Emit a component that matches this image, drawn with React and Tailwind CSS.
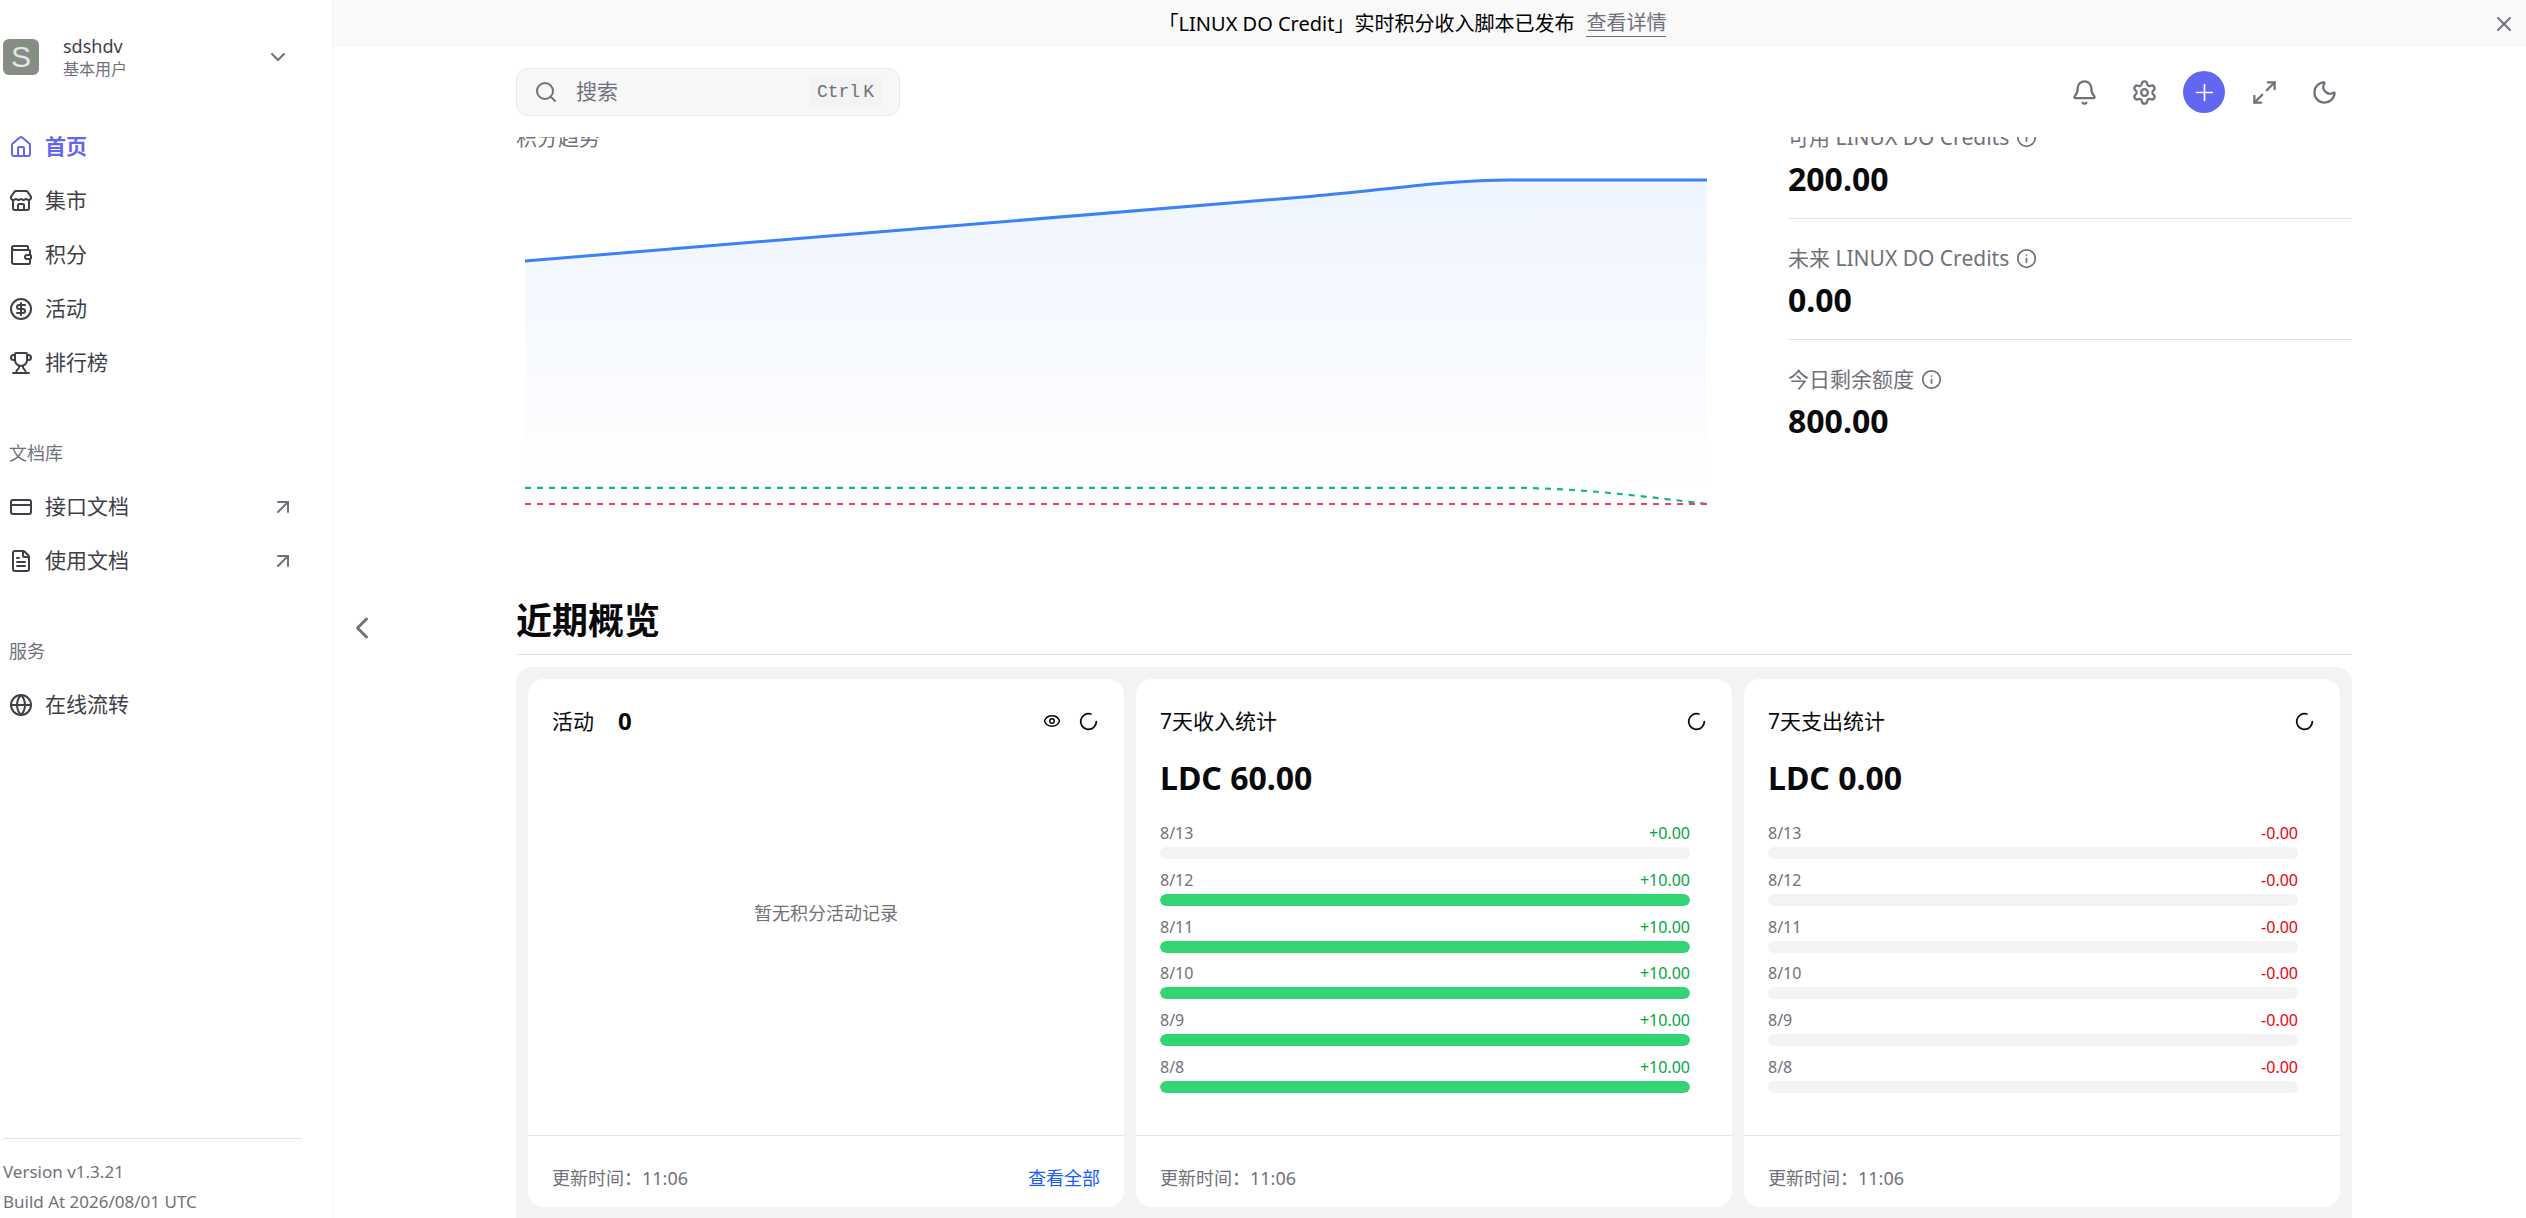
import React, { useState } from "react";
import {
  ArrowUpRight,
  Bell,
  ChevronDown,
  ChevronLeft,
  CircleDollarSign,
  CreditCard,
  Eye,
  FileText,
  Globe,
  House,
  Info,
  LoaderCircle,
  Maximize2,
  Moon,
  Plus,
  Search,
  Settings,
  Store,
  Trophy,
  Wallet,
  X,
} from "lucide-react";

const NAV_GROUPS = [
  {
    items: [
      { label: "首页", icon: House, active: true },
      { label: "集市", icon: Store },
      { label: "积分", icon: Wallet },
      { label: "活动", icon: CircleDollarSign },
      { label: "排行榜", icon: Trophy },
    ],
  },
  {
    title: "文档库",
    items: [
      { label: "接口文档", icon: CreditCard, external: true },
      { label: "使用文档", icon: FileText, external: true },
    ],
  },
  {
    title: "服务",
    items: [{ label: "在线流转", icon: Globe }],
  },
];

const BALANCES = [
  { label: "可用 LINUX DO Credits", value: "200.00" },
  { label: "未来 LINUX DO Credits", value: "0.00" },
  { label: "今日剩余额度", value: "800.00" },
];

const INCOME = [
  { date: "8/13", amount: 0 },
  { date: "8/12", amount: 10 },
  { date: "8/11", amount: 10 },
  { date: "8/10", amount: 10 },
  { date: "8/9", amount: 10 },
  { date: "8/8", amount: 10 },
];

const EXPENSE = INCOME.map(({ date }) => ({ date, amount: 0 }));

const NavItem = ({ label, icon: Icon, active, external }) => (
  <a
    href="#"
    className={`flex h-12 items-center gap-3 pl-[9px] text-[21px] ${
      active ? "font-bold text-[#6366f1]" : "text-zinc-700"
    }`}
  >
    <Icon size={24} />
    <span className="flex-1">{label}</span>
    {external && <ArrowUpRight size={24} className="mr-[7px] text-zinc-500" />}
  </a>
);

const Sidebar = () => (
  <aside className="flex w-[333px] shrink-0 flex-col border-r border-zinc-100 pl-[3px] pr-[30px]">
    <button className="mt-[34px] flex items-center gap-6 text-left">
      <span className="flex size-9 items-center justify-center rounded-md bg-[#858d84] font-['Liberation_Sans'] text-[30px] leading-9 text-[#e4e6e4]">
        S
      </span>
      <span className="flex flex-1 flex-col">
        <span className="text-[18px] leading-6 text-zinc-700">sdshdv</span>
        <span className="text-[16px] leading-[22px] text-zinc-500">基本用户</span>
      </span>
      <ChevronDown size={24} className="mr-3 text-zinc-500" />
    </button>

    <nav className="-ml-[3px] mt-[43px] flex flex-col gap-[53px]">
      {NAV_GROUPS.map((group, i) => (
        <div key={i}>
          {group.title && (
            <h3 className="mb-4 pl-[9px] text-[18px] leading-[27px] text-zinc-500">{group.title}</h3>
          )}
          <div className="flex flex-col gap-[6px]">
            {group.items.map((item) => (
              <NavItem key={item.label} {...item} />
            ))}
          </div>
        </div>
      ))}
    </nav>

    <div className="mt-auto border-t border-zinc-200 pb-px pt-[18px] text-[17px] leading-[30px] text-zinc-500">
      <p>Version v1.3.21</p>
      <p>Build At 2026/08/01 UTC</p>
    </div>
  </aside>
);

const Banner = ({ onClose }) => (
  <div className="flex h-[47px] shrink-0 items-center bg-[#f9f9f9] pr-[10px] text-[20px]">
    <p className="flex flex-1 items-center justify-center gap-3">
      <span className="text-black">「LINUX DO Credit」实时积分收入脚本已发布</span>
      <a href="#" className="border-b border-zinc-500 leading-[26px] text-zinc-500">
        查看详情
      </a>
    </p>
    <button aria-label="关闭" onClick={onClose} className="text-zinc-500">
      <X size={24} />
    </button>
  </div>
);

const IconButton = ({ label, children }) => (
  <button aria-label={label} className="flex size-[54px] items-center justify-center text-zinc-500">
    {children}
  </button>
);

const Header = () => (
  <header className="flex h-[90px] shrink-0 items-center justify-between pl-[183px] pr-[175px]">
    <label className="flex h-12 w-96 items-center gap-[18px] rounded-xl border border-[#ebebeb] bg-[#f7f7f7] px-[17px] text-zinc-500">
      <Search size={24} className="shrink-0" />
      <input
        type="text"
        aria-label="搜索"
        placeholder="搜索"
        className="min-w-0 flex-1 bg-transparent text-[21px] outline-none placeholder:text-zinc-500"
      />
      <kbd className="flex h-[30px] items-center gap-[3px] rounded-md bg-[#f3f3f3] px-2 font-['Liberation_Mono'] text-[18px]">
        <span>Ctrl</span>
        <span>K</span>
      </kbd>
    </label>
    <div className="flex items-center gap-[6px]">
      <IconButton label="通知">
        <Bell size={27} />
      </IconButton>
      <IconButton label="设置">
        <Settings size={27} />
      </IconButton>
      <IconButton label="新建">
        <span className="flex size-[42px] items-center justify-center rounded-full bg-[#6366f1] text-white">
          <Plus size={27} strokeWidth={1.5} />
        </span>
      </IconButton>
      <IconButton label="全屏">
        <Maximize2 size={27} />
      </IconButton>
      <IconButton label="深色模式">
        <Moon size={27} />
      </IconButton>
    </div>
  </header>
);

const TrendChart = () => (
  <svg viewBox="0 0 1200 345" preserveAspectRatio="none" className="mt-[19px] h-[345px] w-full" fill="none">
    <defs>
      <linearGradient id="balance" x1="0" y1="0" x2="0" y2="1">
        <stop offset="5%" stopColor="#3b82f6" stopOpacity="0.08" />
        <stop offset="95%" stopColor="#3b82f6" stopOpacity="0" />
      </linearGradient>
    </defs>
    <path
      d="M9 90L797 25.2C862.7 19.8 928.3 9 994 9H1191V333H9Z"
      fill="url(#balance)"
    />
    <path
      d="M9 90L797 25.2C862.7 19.8 928.3 9 994 9H1191"
      stroke="#3b82f6"
      strokeWidth="3"
    />
    <path
      d="M9 316.8H994C1059.7 316.8 1125.3 324.9 1191 333"
      stroke="#10b981"
      strokeWidth="2.2"
      strokeDasharray="6 6"
    />
    <path d="M9 333H1191" stroke="#f43f5e" strokeWidth="2.2" strokeDasharray="6 6" />
  </svg>
);

const Balance = ({ label, value }) => (
  <div className="border-b border-zinc-200 pb-[18px] pt-6 first:pt-0 last:border-b-0">
    <p className="flex items-center gap-[7px] text-[21px] leading-[30px] text-zinc-500">
      {label}
      <Info size={21} />
    </p>
    <p className="mt-[6px] text-[32px] font-bold leading-[42px] text-zinc-950">{value}</p>
  </div>
);

const Card = ({ title, count, actions, footerLink, children }) => (
  <section className="flex min-h-[528px] flex-1 flex-col rounded-2xl bg-white">
    <div className="flex h-[60px] items-end justify-between px-6 text-[21px] leading-9 text-zinc-950">
      <h3 className="flex gap-6">
        {title}
        {count !== undefined && <span className="text-[24px] font-bold">{count}</span>}
      </h3>
      <div className="flex h-9 items-center gap-3">
        {actions}
        <button aria-label="刷新" className="flex size-6 items-center justify-center">
          <LoaderCircle size={21} />
        </button>
      </div>
    </div>
    <div className="flex flex-1 flex-col px-6">{children}</div>
    <div className="flex h-[72px] items-start justify-between border-t border-zinc-200 px-6 pt-[29px] text-[18px] leading-[27px] text-zinc-500">
      <span>更新时间：11:06</span>
      {footerLink && (
        <a href="#" className="text-blue-600">
          {footerLink}
        </a>
      )}
    </div>
  </section>
);

const StatCard = ({ title, total, sign, rows, color }) => {
  const max = Math.max(...rows.map((row) => row.amount), 1);

  return (
    <Card title={title}>
      <p className="mt-[18px] text-[32px] font-bold leading-[42px] text-zinc-950">{total}</p>
      <ul className="mb-[42px] mr-[18px] mt-6 flex flex-1 flex-col justify-between text-[16px]">
        {rows.map((row) => (
          <li key={row.date}>
            <div className="flex justify-between leading-5 text-zinc-500">
              <span>{row.date}</span>
              <span className={color}>
                {sign}
                {row.amount.toFixed(2)}
              </span>
            </div>
            <div className="mt-1 h-3 overflow-hidden rounded-md bg-[#f3f3f3]">
              <div
                className="h-full rounded-md bg-[#32d474]"
                style={{ width: `${(row.amount / max) * 100}%` }}
              />
            </div>
          </li>
        ))}
      </ul>
    </Card>
  );
};

const App = () => {
  const [showBanner, setShowBanner] = useState(true);

  return (
    <div className="flex h-screen overflow-hidden bg-white font-['Noto_Sans','Noto_Sans_CJK_SC',sans-serif]">
      <Sidebar />

      <div className="relative flex min-w-0 flex-1 flex-col">
        {showBanner && <Banner onClose={() => setShowBanner(false)} />}
        <Header />

        <button aria-label="收起侧栏" className="absolute left-[11px] top-[610px] text-zinc-500">
          <ChevronLeft size={36} />
        </button>

        <main className="flex-1 overflow-hidden pl-[183px] pr-[174px]">
          <div className="-mt-[15px] grid grid-cols-3 gap-[72px]">
            <div className="col-span-2">
              <h2 className="text-[21px] leading-[30px] text-zinc-500">积分趋势</h2>
              <TrendChart />
            </div>
            <div>
              {BALANCES.map((item) => (
                <Balance key={item.label} {...item} />
              ))}
            </div>
          </div>

          <h2 className="mt-[82px] border-b border-zinc-200 pb-[10px] text-[36px] font-bold leading-[46px] text-zinc-950">
            近期概览
          </h2>

          <div className="mt-3 flex gap-3 rounded-2xl bg-[#f3f3f3] px-3 pb-9 pt-3">
            <Card
              title="活动"
              count={0}
              footerLink="查看全部"
              actions={
                <button aria-label="显示" className="flex size-6 items-center justify-center">
                  <Eye size={18} />
                </button>
              }
            >
              <p className="flex flex-1 items-center justify-center pb-12 text-[18px] text-zinc-500">
                暂无积分活动记录
              </p>
            </Card>
            <StatCard title="7天收入统计" total="LDC 60.00" sign="+" rows={INCOME} color="text-green-600" />
            <StatCard title="7天支出统计" total="LDC 0.00" sign="-" rows={EXPENSE} color="text-red-600" />
          </div>
        </main>
      </div>
    </div>
  );
};

export default App;
